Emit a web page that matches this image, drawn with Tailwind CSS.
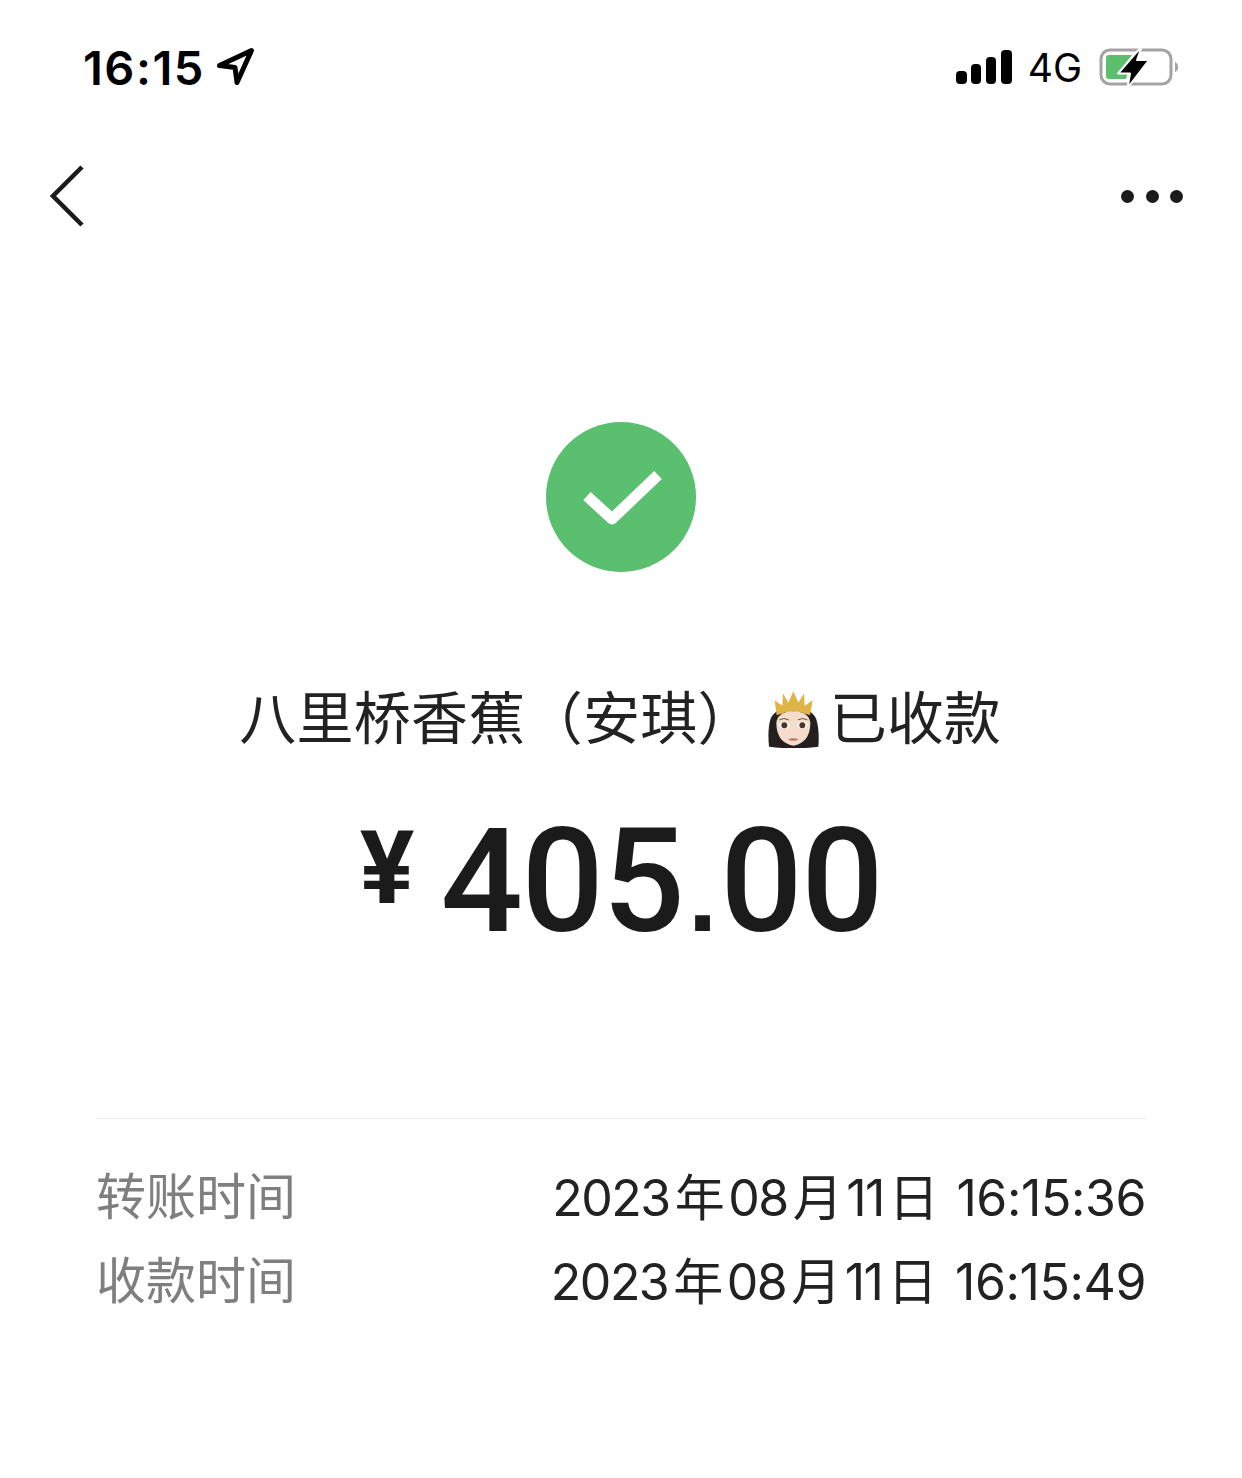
<!DOCTYPE html>
<html lang="zh">
<head>
    <meta charset="UTF-8">
    <title>转账详情</title>
    <script src="https://cdn.jsdelivr.net/npm/@tailwindcss/browser@4"></script>
</head>
<body class="bg-white">
<div class="w-[1242px] h-[1478px] bg-white overflow-hidden font-['Inter','Noto_Sans_CJK_SC',sans-serif] text-[#1b1b1b]">

    <!-- Status bar -->
    <div class="h-[134px] flex items-center justify-between pl-[83px] pr-[63px]">
        <div class="flex items-center gap-[11px] text-black">
            <span class="text-[47px] leading-none font-semibold tracking-[1.500px]">16:15</span>
            <svg class="w-[40px] h-[40px]" viewBox="0 0 40 40" fill="none" stroke="#000" stroke-width="5" stroke-linejoin="round" stroke-linecap="round">
                <path d="M3.500 18.500 L35.500 3.500 L21 35.500 L19 20.500 Z"/>
            </svg>
        </div>
        <div class="flex items-center">
            <svg class="w-[56px] h-[36px]" viewBox="0 0 56 36" fill="#000">
                <rect x="0" y="22" width="11" height="13" rx="4"/>
                <rect x="15" y="15" width="10" height="20" rx="4"/>
                <rect x="30" y="8" width="10" height="27" rx="4"/>
                <rect x="45" y="1" width="11" height="34" rx="4"/>
            </svg>
            <span class="ml-[16px] text-[39px] leading-none font-normal text-black">4G</span>
            <svg class="ml-[17px] w-[80px] h-[44px]" viewBox="0 0 80 44" fill="none">
                <rect x="2" y="5" width="70" height="34" rx="9" stroke="#a3a3a3" stroke-width="3"/>
                <path d="M76 17 C78.500 18 79 20 79 22 C79 24 78.500 26 76 27 Z" fill="#a3a3a3"/>
                <path d="M7 13 Q7 10 10 10 H33 L22 24 H30 L27 34 H10 Q7 34 7 31 Z" fill="#5cbf6d"/>
                <path d="M43 1 L19 28.500 H31 L28.500 43 L50 15 H38 Z" fill="#000" stroke="#fff" stroke-width="2" stroke-linejoin="round"/>
            </svg>
        </div>
    </div>

    <!-- Nav bar -->
    <div class="h-[124px] flex items-center justify-between pl-[50px] pr-[59px]">
        <svg class="w-[34px] h-[62px]" viewBox="0 0 34 62" fill="none" stroke="#1b1b1b" stroke-width="4.500">
            <path d="M32 2 L3 31 L32 60"/>
        </svg>
        <div class="flex gap-[11.500px]">
            <span class="w-[13px] h-[13px] rounded-full bg-[#1b1b1b]"></span>
            <span class="w-[13px] h-[13px] rounded-full bg-[#1b1b1b]"></span>
            <span class="w-[13px] h-[13px] rounded-full bg-[#1b1b1b]"></span>
        </div>
    </div>

    <!-- Result -->
    <div class="flex flex-col items-center pt-[164px]">
        <div class="w-[150px] h-[150px] rounded-full bg-[#5abf6e]">
            <svg class="w-[150px] h-[150px]" viewBox="0 0 150 150" fill="none" stroke="#fff" stroke-width="11" stroke-linejoin="round">
                <path d="M41 74 L66 97 L112 53"/>
            </svg>
        </div>

        <div class="mt-[112px] h-[68px] pr-[2px] flex items-center text-[57px] leading-none font-normal text-[#222]">
            <span class="tracking-[0.300px]">八里桥香蕉（安琪）</span>
            <svg class="w-[51px] h-[57px] mt-[3px] ml-[13px] mr-[11px]" viewBox="52 38 153 170">
                <path d="M55 205 Q50 150 60 120 Q75 88 128 85 Q180 88 196 120 Q207 150 203 205 Q128 214 55 205 Z" fill="#24201f"/>
                <path d="M72 65 L95 82 L97 45 L113 72 L128 38 L143 72 L160 45 L162 82 L186 65 L178 110 Q128 88 78 110 Z" fill="#e0b346"/>
                <path d="M77 135 Q78 100 128 98 Q178 100 179 135 Q178 192 128 202 Q78 192 77 135 Z" fill="#f5dccb"/>
                <ellipse cx="101" cy="140" rx="15" ry="10" fill="#fff"/>
                <ellipse cx="155" cy="140" rx="15" ry="10" fill="#fff"/>
                <circle cx="101" cy="140" r="9" fill="#4a372c"/>
                <circle cx="155" cy="140" r="9" fill="#4a372c"/>
                <path d="M86 124 Q100 116 114 124" fill="none" stroke="#6b5040" stroke-width="3"/>
                <path d="M142 124 Q156 116 170 124" fill="none" stroke="#6b5040" stroke-width="3"/>
                <path d="M112 182 Q128 176 144 182 Q128 192 112 182 Z" fill="#bd7466"/>
            </svg>
            <span>已收款</span>
        </div>

        <div class="mt-[39px] h-[180px] flex items-center font-['Roboto',sans-serif] font-medium text-[#1b1b1b]">
            <span class="text-[102px] leading-none font-bold mr-[26px] -mt-[26px]">¥</span>
            <span class="text-[145px] leading-none tracking-[-1.400px]">405<span class="font-['Liberation_Sans',sans-serif] font-bold text-[105px] mx-[4.500px]">.</span>00</span>
        </div>
    </div>

    <!-- Details -->
    <div class="mt-[147px] mx-[96px] border-t border-[#eaeaea] pt-[36px] text-[50px] leading-[84px]">
        <div class="flex justify-between h-[84px]">
            <span class="text-[#7f7f7f]">转账时间</span>
            <span class="text-[#222] leading-[86px]"><span class="tracking-[-1.500px]">2023<span class="mx-[5px]">年</span>08<span class="mx-[5px]">月</span>11<span class="mx-[5px]">日</span></span> <span class="tracking-[-0.400px]">16:15:36</span></span>
        </div>
        <div class="flex justify-between h-[84px]">
            <span class="text-[#7f7f7f]">收款时间</span>
            <span class="text-[#222] leading-[86px]"><span class="tracking-[-1.500px]">2023<span class="mx-[5px]">年</span>08<span class="mx-[5px]">月</span>11<span class="mx-[5px]">日</span></span> <span class="tracking-[-0.400px]">16:15:49</span></span>
        </div>
    </div>
</div>
</body>
</html>
